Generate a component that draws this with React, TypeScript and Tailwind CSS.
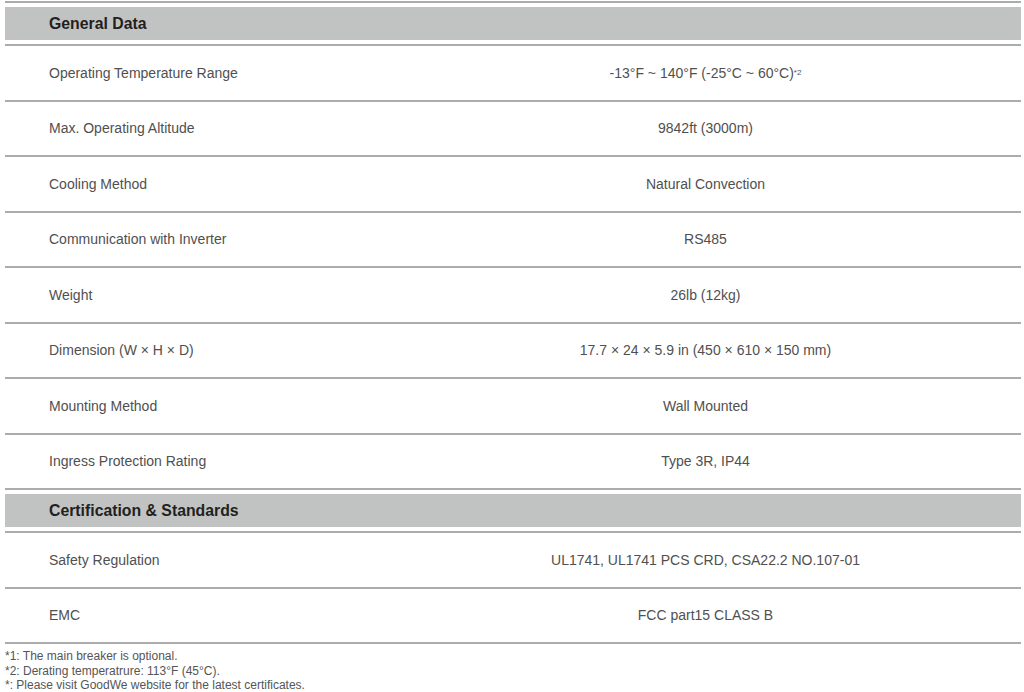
import React from "react";

const general: [string, React.ReactNode][] = [
  [
    "Operating Temperature Range",
    <>
      -13°F ~ 140°F (-25°C ~ 60°C)
      <sup className="text-[8px] relative -top-[3px]">*2</sup>
    </>,
  ],
  ["Max. Operating Altitude", "9842ft (3000m)"],
  ["Cooling Method", "Natural Convection"],
  ["Communication with Inverter", "RS485"],
  ["Weight", "26lb (12kg)"],
  ["Dimension (W × H × D)", "17.7 × 24 × 5.9 in (450 × 610 × 150 mm)"],
  ["Mounting Method", "Wall Mounted"],
  ["Ingress Protection Rating", "Type 3R, IP44"],
];

const cert: [string, React.ReactNode][] = [
  ["Safety Regulation", "UL1741, UL1741 PCS CRD, CSA22.2 NO.107-01"],
  ["EMC", "FCC part15 CLASS B"],
];

function Header({ title }: { title: string }) {
  return (
    <div className="border-b-2 border-[#acacac] pt-[4px] pb-[4px]">
      <div className="h-[33px] bg-[#c1c3c2] flex items-center pl-[44px] pt-[1px]">
        <span className="text-[15.8px] font-bold text-[#231f20]">{title}</span>
      </div>
    </div>
  );
}

function Row({ label, value }: { label: string; value: React.ReactNode }) {
  return (
    <div className="h-[55.5px] border-b-2 border-[#acacac] flex items-center pt-[1px] text-[14px] text-[#505050]">
      <div className="w-[385px] pl-[44px]">{label}</div>
      <div className="flex-1 text-center">{value}</div>
    </div>
  );
}

export default function App() {
  return (
    <div
      className="w-[1024px] h-[692px] bg-white overflow-hidden px-[5px] pt-[1px]"
      style={{ fontFamily: '"Liberation Sans", Arial, sans-serif' }}
    >
      <div className="w-[1016px]">
        <div className="border-t-2 border-[#acacac]" />
        <Header title="General Data" />
        {general.map(([l, v]) => (
          <Row key={l} label={l} value={v} />
        ))}
        <Header title="Certification & Standards" />
        {cert.map(([l, v]) => (
          <Row key={l} label={l} value={v} />
        ))}
        <div className="pt-[5px] text-[12px] leading-[14.5px] text-[#555555]">
          <div>*1: The main breaker is optional.</div>
          <div>*2: Derating temperatrure: 113°F (45°C).</div>
          <div>*: Please visit GoodWe website for the latest certificates.</div>
        </div>
      </div>
    </div>
  );
}
